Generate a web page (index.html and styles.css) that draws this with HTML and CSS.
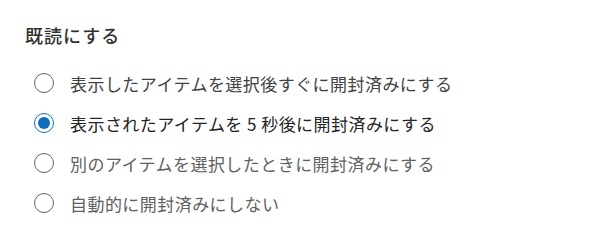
FILE: index.html
```html
<!DOCTYPE html>
<html lang="ja">
<head>
    <meta charset="UTF-8">
    <meta name="viewport" content="width=device-width, initial-scale=1.0">
    <title>既読にする</title>
    <link rel="stylesheet" href="styles.css">
</head>
<body>

    <div class="ajustes">
        <div class="titulo">既読にする</div>

        <div class="opciones">
            <label class="opcion tono-medio">
                <input type="radio" name="leido" value="inmediato">
                <span class="circulo"></span>
                <span>表示したアイテムを選択後すぐに開封済みにする</span>
            </label>
            <label class="opcion">
                <input type="radio" name="leido" value="espera" checked>
                <span class="circulo"></span>
                <span>表示されたアイテムを 5 秒後に開封済みにする</span>
            </label>
            <label class="opcion tono-claro">
                <input type="radio" name="leido" value="cambio">
                <span class="circulo"></span>
                <span>別のアイテムを選択したときに開封済みにする</span>
            </label>
            <label class="opcion tono-claro">
                <input type="radio" name="leido" value="nunca">
                <span class="circulo"></span>
                <span>自動的に開封済みにしない</span>
            </label>
        </div>
    </div>

</body>
</html>
```

FILE: styles.css
```css
body {
    font-family: "Noto Sans CJK JP", "Noto Sans", sans-serif;
    background-color: #ffffff;
    margin: 0;
}

.ajustes {
    padding: 21px 25px;
}

.titulo {
    font-size: 18px;
    font-weight: 500;
    letter-spacing: 1px;
    color: #323130; /* casi negro para el título */
    line-height: 28px;
    margin-bottom: 18px;
}

.opciones {
    display: flex;
    flex-direction: column;
    gap: 8px;
}

.opcion {
    display: flex;
    align-items: center;
    height: 32px;
    padding-left: 9px;
    font-size: 17px;
    letter-spacing: 0.45px;
    color: #242424;
    cursor: pointer;
}

.opcion input {
    display: none;
}

.circulo {
    width: 18px;
    height: 18px;
    border: 1px solid #616161;
    border-radius: 50%;
    margin-right: 16px;
    flex-shrink: 0;
    position: relative;
}

.opcion input:checked + .circulo {
    border-color: #0f6cbd; /* azul de selección */
}

.opcion input:checked + .circulo::after {
    content: "";
    position: absolute;
    left: 3px;
    top: 3px;
    width: 12px;
    height: 12px;
    border-radius: 50%;
    background-color: #0f6cbd;
}

.tono-medio {
    color: #424242;
}

.tono-claro {
    color: #616161;
}
```
